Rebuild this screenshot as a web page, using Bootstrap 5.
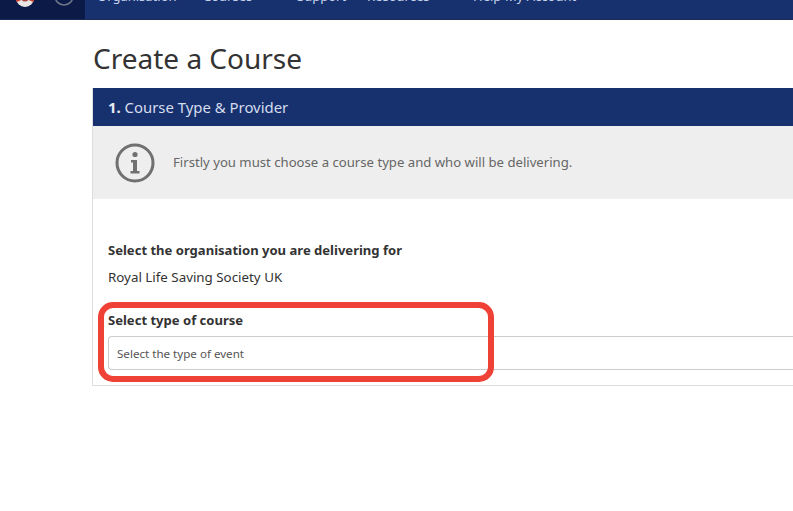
<!DOCTYPE html>
<html lang="en">
<head>
<meta charset="utf-8">
<title>Create a Course</title>
<link href="https://cdn.jsdelivr.net/npm/bootstrap@5.3.0/dist/css/bootstrap.min.css" rel="stylesheet">
<style>
html,body{height:511px;overflow:hidden;}
body{font-family:"Noto Sans","Open Sans",sans-serif;color:#333;background:#fff;}
.topbar{height:20px;background:#17316f;overflow:hidden;border-bottom:1px solid #1b2b55;}
.brandbox{width:85px;height:21px;background:#0b1a47;flex:none;overflow:hidden;position:relative;}
.lifering{position:absolute;left:16px;top:-11px;width:18px;height:18px;}
.helpring{position:absolute;left:54px;top:-14px;width:20px;height:20px;}
.topnav{margin:-13px 0 0 12px;font-size:13px;line-height:18px;color:#c4d0ea;white-space:nowrap;}
.topnav span{display:block;}
.topnav .w1{width:106px}.topnav .w2{width:94px}.topnav .w3{width:70px}.topnav .w4{width:106px}.topnav .w5{width:32px}
.pagewrap{margin-left:92px;width:780px;}
.pagetitle{font-size:28px;font-weight:400;line-height:34px;margin:21px 0 13px 1px;color:#333;}
.panelbox{border:1px solid #ddd;border-top:0;height:298px;position:relative;}
.panelhead{background:#17316f;color:#d5dcec;height:38px;font-size:14.9px;line-height:38px;padding-left:15px;}
.panelhead b{color:#e6ebf5;}
.infostrip{background:#eee;height:73px;gap:18px;padding-left:22px;color:#666;font-size:13.15px;}
.fieldlabel{font-size:13.05px;font-weight:700;color:#333;line-height:18px;}
.secondlabel{margin-top:25px;}
.orgname{font-size:13.35px;line-height:18px;color:#333;margin-top:9px;}
.orgblock{padding:42px 15px 0;}
.fieldselect{height:34px;border:1px solid #ccc;border-right:0;border-radius:4px 0 0 4px;background:#fff;font-size:11.6px;color:#555;padding:0 8px;line-height:33px;margin-top:7px;}
.highlight{position:absolute;left:5px;top:214px;width:396px;height:80px;border:6px solid #ef4136;border-radius:15px;pointer-events:none;}
</style>
</head>
<body>
<div class="topbar d-flex">
  <div class="brandbox">
    <svg class="lifering" viewBox="0 0 18 18"><circle cx="9" cy="9" r="9" fill="#e9e6e4"/><path d="M0.8 5a9 9 0 0 0 0 8l4.5-2V7zM17.2 5a9 9 0 0 1 0 8l-4.5-2V7z" fill="#cf3b2b"/><circle cx="9" cy="9" r="3.6" fill="#a8453f"/></svg>
    <svg class="helpring" viewBox="0 0 20 20"><circle cx="10" cy="10" r="9" fill="none" stroke="#6f7689" stroke-width="1.6"/></svg>
  </div>
  <div class="topnav d-flex">
    <span class="w1">Organisation</span><span class="w2">Courses</span><span class="w3">Support</span><span class="w4">Resources</span><span class="w5">Help</span><span>My Account</span>
  </div>
</div>
<div class="pagewrap">
  <h1 class="pagetitle">Create a Course</h1>
  <div class="panelbox">
    <div class="panelhead"><b>1.</b> Course Type &amp; Provider</div>
    <div class="infostrip d-flex align-items-center">
      <svg width="40" height="40" viewBox="0 0 40 40"><circle cx="20" cy="20" r="18" fill="none" stroke="#707070" stroke-width="3"/><circle cx="20" cy="11.5" r="2.6" fill="#707070"/><path d="M16 17h6v11h2.5v2.5h-9V28H18v-8.5h-2z" fill="#707070"/></svg>
      <span>Firstly you must choose a course type and who will be delivering.</span>
    </div>
    <div class="orgblock">
      <div class="fieldlabel">Select the organisation you are delivering for</div>
      <div class="orgname">Royal Life Saving Society UK</div>
      <div class="fieldlabel secondlabel">Select type of course</div>
      <div class="fieldselect">Select the type of event</div>
    </div>
    <div class="highlight"></div>
  </div>
</div>
<script src="https://cdn.jsdelivr.net/npm/bootstrap@5.3.0/dist/js/bootstrap.bundle.min.js"></script>
</body>
</html>
